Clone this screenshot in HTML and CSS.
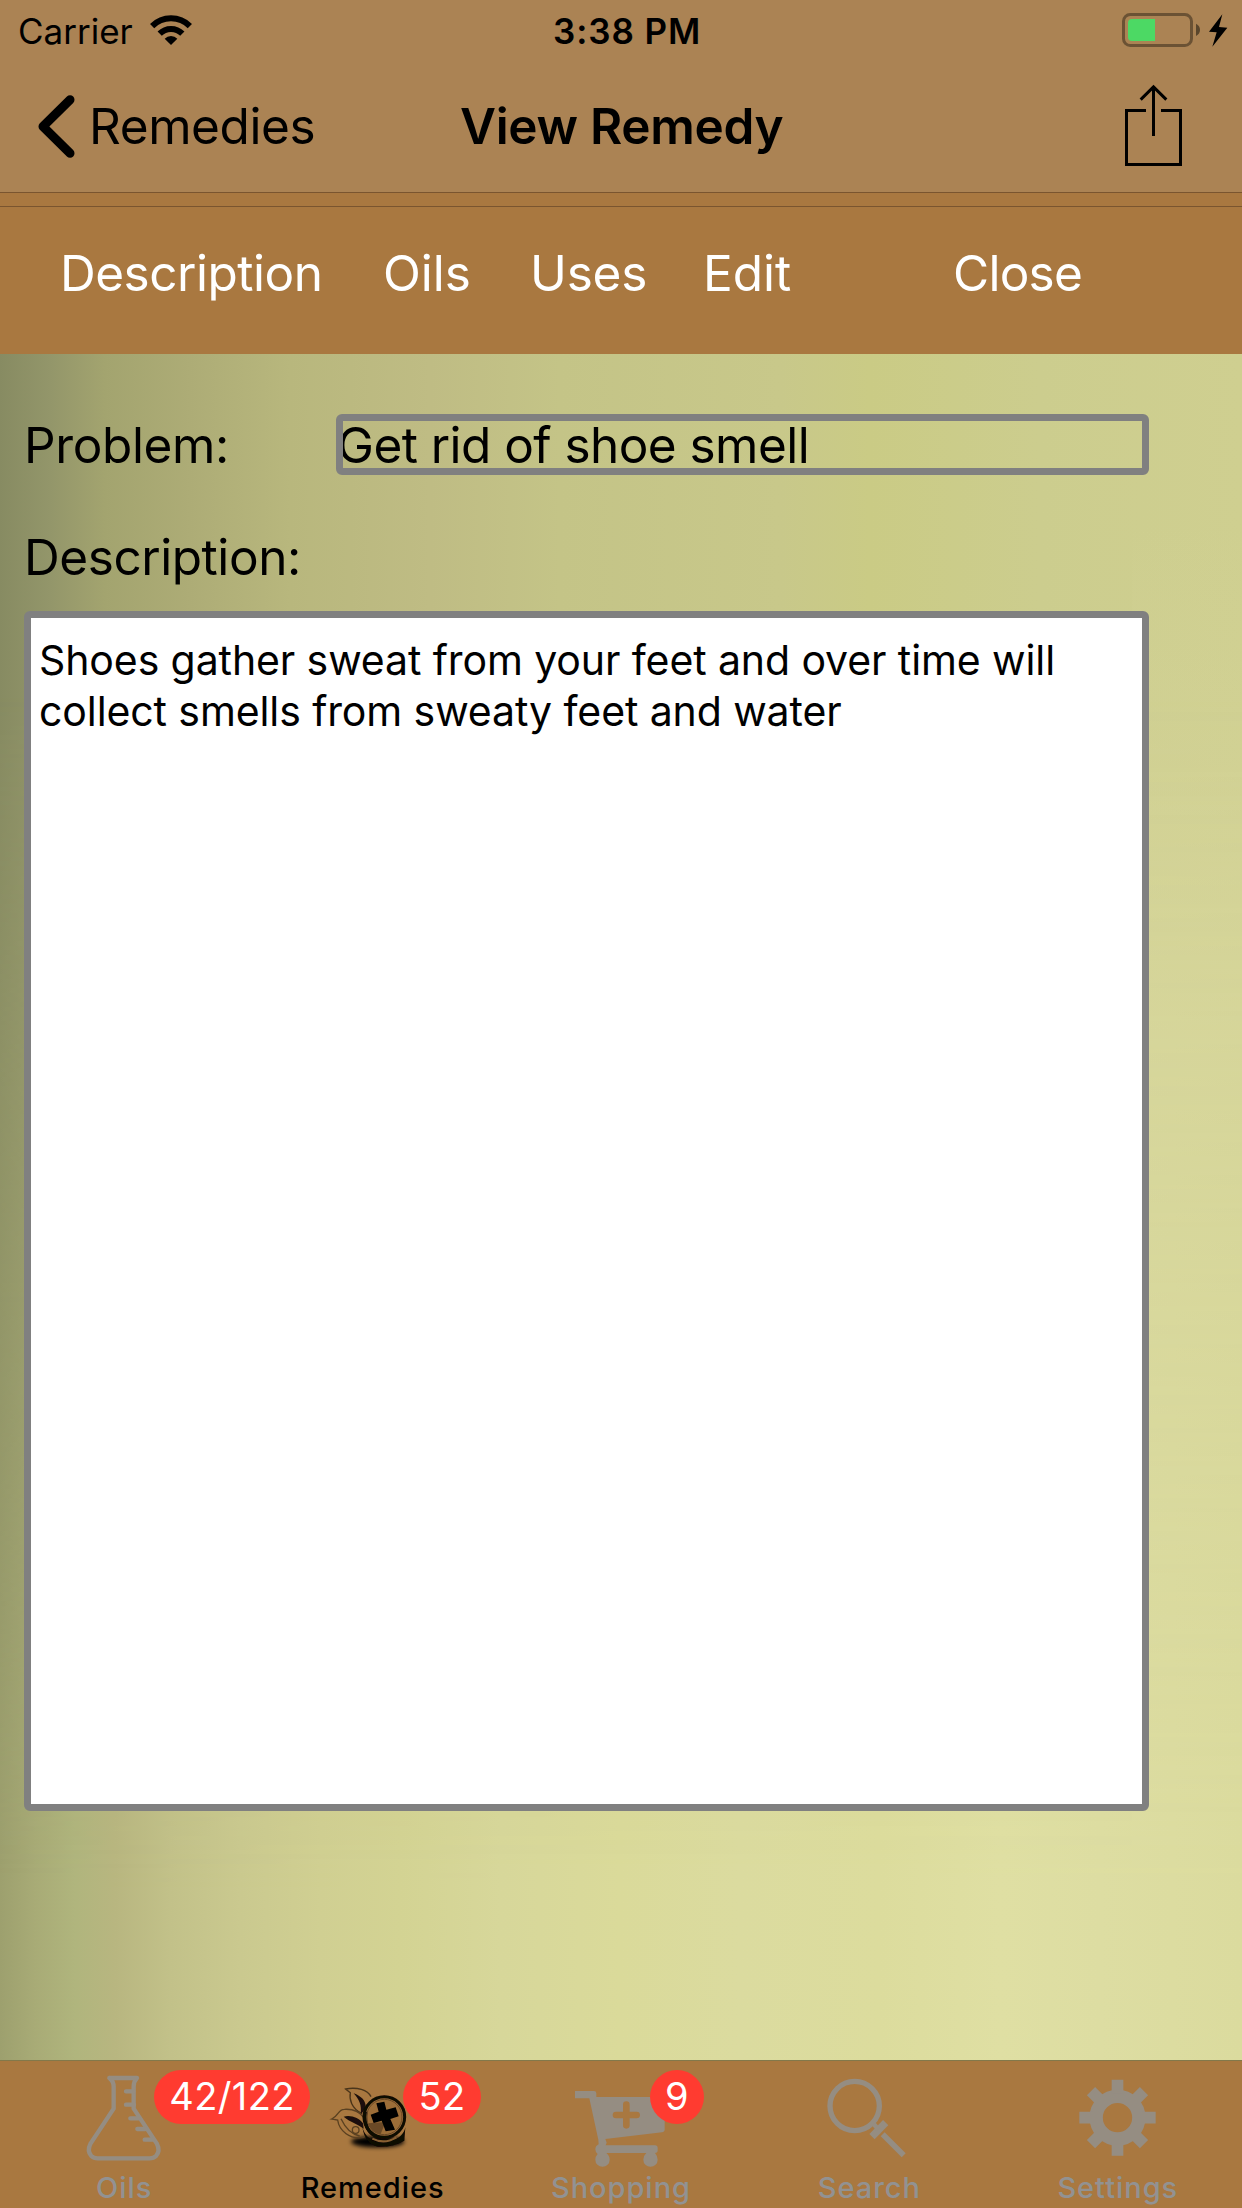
FILE: index.html
```
<!DOCTYPE html>
<html lang="en">
<head>
<meta charset="utf-8">
<title>View Remedy</title>
<link rel="stylesheet" href="styles.css">
</head>
<body>
<div class="screen">
  <header class="top">
    <div class="status">
      <div class="carrier">
        <span>Carrier</span>
        <svg class="wifi" viewBox="450 44 126 90" fill="none" stroke="#000" stroke-width="18">
          <path d="M456.4 77.4A80 80 0 0 1 569.6 77.4"/>
          <path d="M479 100A48 48 0 0 1 547 100"/>
          <path d="M513 134L494 115A27 27 0 0 1 532 115Z" fill="#000" stroke="none"/>
        </svg>
      </div>
      <span class="clock">3:38 PM</span>
      <svg class="battery" viewBox="846 39 318 102">
        <rect x="850.5" y="43.5" width="204" height="93" rx="20" fill="none" stroke="#6b5234" stroke-width="9"/>
        <path d="M945 57V123H876Q864 123 864 111V69Q864 57 876 57Z" fill="#4cd964"/>
        <path d="M1068 71Q1080 77 1080 89.500Q1080 102 1068 108Z" fill="#5a462c"/>
        <path d="M1147 43L1107 95L1130 97L1117 140L1162 83L1137 81Z"/>
      </svg>
    </div>
    <div class="nav">
      <a class="back">
        <svg class="chevron" viewBox="114 284 112 190"><path d="M211 298L129 379L211 460" fill="none" stroke="#000" stroke-width="27" stroke-linecap="round" stroke-linejoin="round"/></svg>
        <span>Remedies</span>
      </a>
      <h1 class="title">View Remedy</h1>
      <svg class="share" viewBox="855 252 171 246" fill="none" stroke="#000" stroke-width="9">
        <path d="M918 331.500H859.500V493.500H1021.500V331.500H963M940.500 408V262M902 299L940.500 260.500L979 299"/>
      </svg>
    </div>
  </header>
  <div class="strip"></div>
  <nav class="menu">
    <a class="description">Description</a>
    <a>Oils</a>
    <a class="uses">Uses</a>
    <a>Edit</a>
    <a class="close">Close</a>
  </nav>
  <main class="content">
    <div class="row">
      <label class="problem">Problem:</label>
      <div class="field">Get rid of shoe smell</div>
    </div>
    <label class="desc-label">Description:</label>
    <div class="text">Shoes gather sweat from your feet and over time will<br>collect smells from sweaty feet and water</div>
  </main>
  <footer class="tabs">
    <div class="tab">
      <svg class="icon" viewBox="237 63 270 324" fill="none" stroke="#958d82" stroke-width="13" stroke-linecap="round" stroke-linejoin="round">
        <path d="M328 114H411M328 114Q341 124 341 140V206L272 310Q260 333 274 348Q281 355 293 355H449Q461 355 468 348Q482 333 470 310L401 206V140Q401 124 411 114"/>
        <path d="M378 154H400M378 194H402M391 235H416M412 267H436M434 299H458"/>
      </svg>
      <span class="name">Oils</span>
      <span class="badge wide">42/122</span>
    </div>
    <div class="tab active">
      <svg class="icon" viewBox="113 63 270 324">
        <defs>
          <filter id="soft" x="-20%" y="-40%" width="140%" height="180%"><feGaussianBlur stdDeviation="7"/></filter>
          <filter id="fine"><feGaussianBlur stdDeviation="2.200"/></filter>
        </defs>
        <ellipse cx="262" cy="305" rx="80" ry="17" filter="url(#soft)"/>
        <g filter="url(#fine)">
          <path d="M214 220C184 206 176 178 180 158L166 147C200 140 232 150 242 170" fill="none" stroke="#4a341a" stroke-width="4"/>
          <path d="M190 160C212 168 228 182 226 204L211 224C215 194 206 178 190 160Z" fill="#1a1008"/>
          <path d="M222 292C176 300 146 270 142 240L124 237C146 228 142 208 162 208C190 206 208 216 220 232" fill="none" stroke="#5a4020" stroke-width="4"/>
          <path d="M160 230C182 224 206 234 218 250L220 266C200 250 182 248 160 230Z" fill="#1a1008"/>
          <path d="M152 236C164 262 182 282 208 288" fill="none" stroke="#5a4020" stroke-width="4"/>
          <circle cx="196" cy="270" r="10" fill="none" stroke="#5a4020" stroke-width="4"/>
          <path d="M216 262C226 300 262 314 300 304C326 298 342 280 345 262L342 302Q310 322 262 320Q224 312 216 262Z" fill="#0d0804"/>
          <path d="M246 296Q282 314 318 292" fill="none" stroke="#8a6132" stroke-width="6"/>
          <circle cx="282" cy="231" r="61" fill="#9c6d38" stroke="#0d0804" stroke-width="9"/>
          <path d="M222 220C214 256 232 292 270 298C236 280 226 250 232 214Z" fill="#0d0804"/>
          <path d="M234 250L286 246L270 284Q240 278 234 250Z" fill="#6b4a26"/>
          <circle cx="282" cy="231" r="53" fill="none" stroke="#6b4a26" stroke-width="3"/>
          <path d="M258 190L282 185L288 209L316 202L325 229L300 237L314 269L286 274L274 242L250 249L241 224L265 215Z"/>
        </g>
      </svg>
      <span class="name">Remedies</span>
      <span class="badge">52</span>
    </div>
    <div class="tab">
      <svg class="icon" viewBox="168 63 270 324" fill="#958d82">
        <path d="M165 153H222Q229 153 229 160V171H434V268Q434 276 426 277L256 297L260 308L257 316H405Q413 316 413 324V331Q413 339 405 339Q413 348 413 359A21.500 21.500 0 0 1 370 359Q370 347 379 339H259Q269 347 269 359A21.500 21.500 0 0 1 226 359Q226 349 233 342Q226 337 226 328Q226 318 236 313L235 299L208 175H165Z"/>
        <path d="M319 194V256M288 225H350" stroke="#a97840" stroke-width="20" stroke-linecap="round"/>
      </svg>
      <span class="name">Shopping</span>
      <span class="badge round">9</span>
    </div>
    <div class="tab">
      <svg class="icon" viewBox="133 63 270 324" fill="none" stroke="#958d82">
        <circle cx="225" cy="198" r="74" stroke-width="16"/>
        <path d="M277 290L318 248" stroke-width="22"/>
        <path d="M282 252L296 268" stroke-width="14"/>
        <path d="M309 283L372 346" stroke-width="17"/>
      </svg>
      <span class="name">Search</span>
    </div>
    <div class="tab">
      <svg class="icon" viewBox="878 63 270 324" fill="none" stroke="#958d82">
        <circle cx="1011.500" cy="233" r="64" stroke-width="40"/>
        <g stroke-width="35">
          <path d="M1011.500 119V160M1011.500 306V347M897 233H938M1085 233H1126"/>
          <path d="M932 153.500L956 177.500M1091 153.500L1067 177.500M932 312.500L956 288.500M1091 312.500L1067 288.500"/>
        </g>
      </svg>
      <span class="name">Settings</span>
    </div>
  </footer>
</div>
</body>
</html>
```
FILE: styles.css
```
* { box-sizing: border-box; }

body {
  margin: 0;
  font-family: Inter, "Liberation Sans", sans-serif;
  color: #000;
}

.screen {
  width: 1242px;
  height: 2208px;
  display: flex;
  flex-direction: column;
  overflow: hidden;
}

.top {
  height: 193px;
  background: #ab8354;
  border-bottom: 1px solid #7a552f;
}

.status {
  display: grid;
  grid-template-columns: 535px 1fr auto;
  align-items: center;
  height: 60px;
  padding: 3px 14px 0 18px;
  font-size: 35px;
  line-height: 57px;
}

.carrier { display: flex; align-items: center; gap: 17px; }
.wifi { width: 42px; height: 30px; margin-top: -4px; }
.clock { font-weight: 600; letter-spacing: 0.92px; }
.battery { width: 106px; height: 34px; margin-top: -3px; }

.nav {
  display: grid;
  grid-template-columns: 422px 1fr auto;
  align-items: center;
  height: 132px;
  padding: 0 60px 0 38px;
  font-size: 49.5px;
  line-height: 60px;
}

.back { display: flex; align-items: center; gap: 14px; letter-spacing: -0.41px; }
.chevron { width: 37px; height: 63px; }
.title { margin: 0; font-size: inherit; font-weight: 600; letter-spacing: -0.3px; }
.share { display: block; width: 57px; height: 82px; margin-top: -2px; }

.strip { height: 13px; background: #a97840; }

.menu {
  display: grid;
  grid-template-columns: 323px 146px 174px 250px 1fr;
  height: 148px;
  padding: 36px 0 0 60px;
  background: #a97840;
  border-top: 1px solid #7a552f;
  color: #fff;
  font-size: 49.5px;
  line-height: 60px;
}

.description { letter-spacing: -0.48px; }
.uses { letter-spacing: -0.2px; padding-left: 1px; }
.close { letter-spacing: -0.74px; }

.content {
  position: relative;
  z-index: 0;
  height: 1706px;
  padding: 60px 0 0 24px;
  font-size: 49.5px;
  background:
    linear-gradient(to bottom, transparent 10%, rgba(214, 213, 155, 0.75) 40%, rgba(214, 213, 155, 0.75)) right / 110px 100% no-repeat,
    linear-gradient(to right, #878b62 0, #93966a 50px, #a3a46f 105px, #adac76 190px, #b8b77d 290px, #bfbc84 430px, #c4c487 560px, #c8c88a 780px, #cacb85 870px, #cccd8e 1040px, #cfcf90 1242px);
}

/* lower, lighter part of the backdrop */
.content::before {
  content: "";
  position: absolute;
  inset: 0;
  z-index: -1;
  background: linear-gradient(to right, #9da06e 0, #a8ab76 35px, #b0b57d 75px, #b8b680 115px, #c2c189 170px, #cac98f 240px, #d0cf92 320px, #d3d393 400px, #d7d79a 500px, #dada9a 620px, #dbdb9f 740px, #dcdc9d 880px, #dfdfa3 1000px, #dddda2 1100px, #dbdb9e 1242px);
  -webkit-mask-image: linear-gradient(to bottom, transparent 20%, #000 90%);
  mask-image: linear-gradient(to bottom, transparent 20%, #000 90%);
}

.row {
  display: grid;
  grid-template-columns: 312px 813px;
  grid-template-rows: 61px;
  height: 61px;
  line-height: 63px;
}

.problem { letter-spacing: -0.38px; }

.field {
  position: relative;
  padding-left: 1px;
  letter-spacing: -0.55px;
}

/* the frame is painted over the first letter */
.field::after {
  content: "";
  position: absolute;
  inset: 0;
  border: 7px solid #808080;
  border-radius: 6px;
}

.desc-label {
  display: block;
  padding-top: 28px;
  height: 136px;
  line-height: 108px;
  letter-spacing: -0.44px;
}

.text {
  width: 1125px;
  height: 1200px;
  padding: 17px 8px;
  background: #fff;
  border: 7px solid #808080;
  border-radius: 6px;
  font-size: 41px;
  line-height: 51px;
  letter-spacing: -0.1px;
}

.tabs {
  display: grid;
  grid-template-columns: repeat(5, 1fr);
  height: 148px;
  background: #a97840;
  border-top: 1px solid #82784a;
}

.tab {
  position: relative;
  display: flex;
  flex-direction: column;
  align-items: center;
  color: #929292;
}

.tab.active { color: #000; }
.icon { width: 90px; height: 108px; overflow: visible; }
.name { font-size: 29px; font-weight: 500; line-height: 37px; letter-spacing: 0.96px; }

.badge {
  position: absolute;
  left: 154.6px;
  top: 9px;
  width: 78px;
  height: 54px;
  border-radius: 27px;
  background: #ff3b30;
  color: #fff;
  font-size: 38px;
  line-height: 52px;
  letter-spacing: 0.4px;
  text-align: center;
}

.badge.wide { left: 154px; width: 156px; }
.badge.round { left: 153px; width: 54px; letter-spacing: 0; }
```
